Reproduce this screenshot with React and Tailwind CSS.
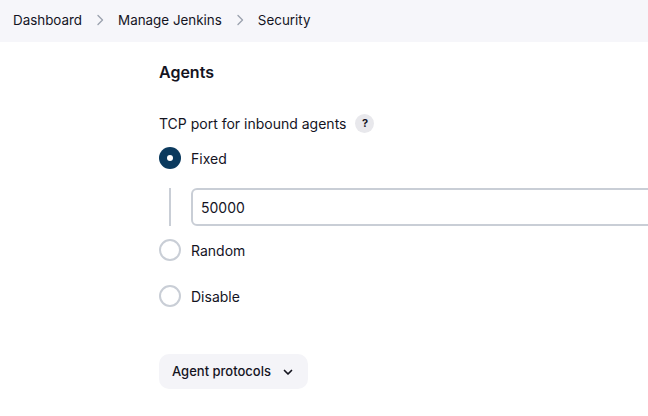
import React from 'react'

function Radio({ checked, label }) {
  return (
    <label className="flex items-center gap-[10px] h-[22px]">
      {checked ? (
        <span className="w-[22px] h-[22px] rounded-full bg-[#0b3a5e] flex items-center justify-center">
          <span className="w-[6px] h-[6px] rounded-full bg-white" />
        </span>
      ) : (
        <span className="w-[22px] h-[22px] rounded-full border-2 border-[#c9ced6] bg-white" />
      )}
      <span className="text-[14px] text-[#14141f]">{label}</span>
    </label>
  )
}

function App() {
  const [port, setPort] = React.useState('50000')
  return (
    <div className="min-h-screen bg-white overflow-hidden" style={{ fontFamily: 'Inter, "Noto Sans", sans-serif' }}>
      <div className="h-[42px] bg-[#f6f6fa] flex items-center pl-[13px] pb-[2px] text-[13.4px] text-[#14141f]">
        <span>Dashboard</span>
        <svg className="mx-[14px] text-[#9ca3af]" width="8" height="12" viewBox="0 0 8 12" fill="none" stroke="currentColor" strokeWidth="1.4" strokeLinecap="round" strokeLinejoin="round"><path d="M2 1.5l4.5 4.5L2 10.5" /></svg>
        <span>Manage Jenkins</span>
        <svg className="mx-[14px] text-[#9ca3af]" width="8" height="12" viewBox="0 0 8 12" fill="none" stroke="currentColor" strokeWidth="1.4" strokeLinecap="round" strokeLinejoin="round"><path d="M2 1.5l4.5 4.5L2 10.5" /></svg>
        <span>Security</span>
      </div>

      <div className="pl-[159px]">
        <h2 className="pt-[19px] text-[16px] font-semibold text-[#14141f] leading-[22px]">Agents</h2>

        <div className="mt-[29px] flex items-center gap-[9px] h-[22px]">
          <span className="text-[14px] text-[#14141f]">TCP port for inbound agents</span>
          <span className="w-[19px] h-[19px] rounded-full bg-[#e8e8ec] flex items-center justify-center text-[11px] font-bold text-[#14141f]">?</span>
        </div>

        <div className="mt-[13px]">
          <Radio checked label="Fixed" />
        </div>

        <div className="mt-[19px] flex">
          <div className="w-[22px] shrink-0 flex justify-center">
            <div className="w-[2px] h-[38px] bg-[#c9ced6]" />
          </div>
          <input
            type="text"
            value={port}
            onChange={(e) => setPort(e.target.value)}
            className="ml-[10px] shrink-0 w-[520px] h-[38px] border-2 border-[#c9ced6] rounded-[6px] px-[8px] text-[14px] text-[#14141f] outline-none"
          />
        </div>

        <div className="mt-[13px]">
          <Radio label="Random" />
        </div>
        <div className="mt-[24px]">
          <Radio label="Disable" />
        </div>

        <button className="mt-[47px] h-[35px] pl-[13px] pr-[15px] rounded-[10px] bg-[#f4f4f8] flex items-center gap-[12px] text-[13px] font-medium text-[#14141f]">
          Agent protocols
          <svg width="10" height="8" viewBox="0 0 10 8" fill="none" stroke="currentColor" strokeWidth="1.7" strokeLinecap="round" strokeLinejoin="round"><path d="M1.5 2.5L5 6l3.5-3.5" /></svg>
        </button>
      </div>
    </div>
  )
}

export default App
